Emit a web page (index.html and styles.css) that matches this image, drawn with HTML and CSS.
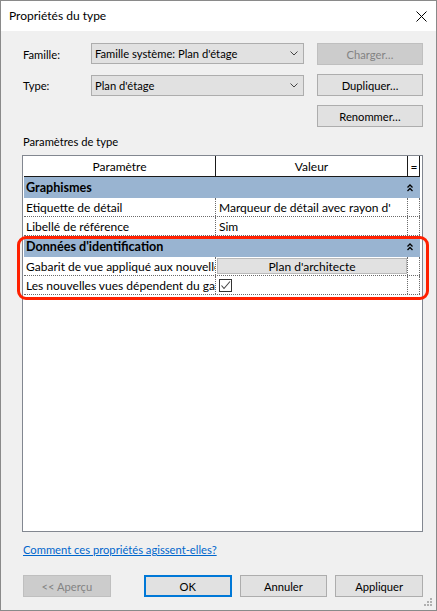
FILE: index.html
```html
<!DOCTYPE html>
<html lang="fr">
<head>
<meta charset="utf-8">
<title>Propriétés du type</title>
<link rel="stylesheet" href="styles.css">
</head>
<body>
<div class="window">
  <div class="titlebar">
    <span class="title">Propriétés du type</span>
    <svg class="close" width="11" height="11" viewBox="0 0 11 11"><path d="M0.5 0.5 L10.5 10.5 M10.5 0.5 L0.5 10.5" stroke="#000" stroke-width="1" fill="none"/></svg>
  </div>
  <div class="body">
    <div class="top">
      <span class="label r1">Famille:</span>
      <div class="combo r1">
        <span>Famille système: Plan d'étage</span>
        <svg class="chev" width="8" height="5" viewBox="0 0 8 5"><polyline points="0.5,0.5 4,4 7.5,0.5" fill="none" stroke="#444" stroke-width="1"/></svg>
      </div>
      <button class="btn disabled r1">Charger…</button>
      <span class="label r2">Type:</span>
      <div class="combo combo2 r2">
        <span>Plan d'étage</span>
        <svg class="chev" width="8" height="5" viewBox="0 0 8 5"><polyline points="0.5,0.5 4,4 7.5,0.5" fill="none" stroke="#444" stroke-width="1"/></svg>
      </div>
      <button class="btn r2">Dupliquer…</button>
      <button class="btn r3">Renommer…</button>
    </div>

    <div class="section-label">Paramètres de type</div>

    <div class="grid">
      <div class="row head">
        <div class="c1">Paramètre</div>
        <div class="c2">Valeur</div>
        <div class="c3">=</div>
      </div>
      <div class="band">
        <span>Graphismes</span>
        <svg class="dchev" width="6" height="8" viewBox="0 0 6 8"><polyline points="0.5,3.5 3,1 5.5,3.5" fill="none" stroke="#000" stroke-width="1.3"/><polyline points="0.5,7 3,4.5 5.5,7" fill="none" stroke="#000" stroke-width="1.3"/></svg>
      </div>
      <div class="row data">
        <div class="c1">Etiquette de détail</div>
        <div class="c2">Marqueur de détail avec rayon d'</div>
        <div class="c3"></div>
      </div>
      <div class="row data">
        <div class="c1">Libellé de référence</div>
        <div class="c2">Sim</div>
        <div class="c3"></div>
      </div>
      <div class="band">
        <span>Données d'identification</span>
        <svg class="dchev" width="6" height="8" viewBox="0 0 6 8"><polyline points="0.5,3.5 3,1 5.5,3.5" fill="none" stroke="#000" stroke-width="1.3"/><polyline points="0.5,7 3,4.5 5.5,7" fill="none" stroke="#000" stroke-width="1.3"/></svg>
      </div>
      <div class="row data">
        <div class="c1">Gabarit de vue appliqué aux nouvelles vues</div>
        <div class="c2 btncell"><span class="cellbtn">Plan d'architecte</span></div>
        <div class="c3"></div>
      </div>
      <div class="row data">
        <div class="c1">Les nouvelles vues dépendent du gabarit</div>
        <div class="c2"><span class="check"><svg width="11" height="11" viewBox="0 0 11 11"><polyline points="1.5,5.5 4,8.5 10,1.5" fill="none" stroke="#444" stroke-width="1.1"/></svg></span></div>
        <div class="c3"></div>
      </div>
    </div>

    <a class="help" href="#">Comment ces propriétés agissent-elles?</a>

    <div class="footer">
      <button class="btn disabled">&lt;&lt; Aperçu</button>
      <button class="btn default">OK</button>
      <button class="btn">Annuler</button>
      <button class="btn">Appliquer</button>
    </div>
  </div>

  <div class="highlight"></div>
  <svg class="grip" width="9" height="9" viewBox="0 0 9 9">
    <rect x="6" y="0" width="2" height="2" fill="#b0b0b0"/>
    <rect x="3" y="3" width="2" height="2" fill="#b0b0b0"/>
    <rect x="6" y="3" width="2" height="2" fill="#b0b0b0"/>
    <rect x="0" y="6" width="2" height="2" fill="#b0b0b0"/>
    <rect x="3" y="6" width="2" height="2" fill="#b0b0b0"/>
    <rect x="6" y="6" width="2" height="2" fill="#b0b0b0"/>
  </svg>
</div>
</body>
</html>
```

FILE: styles.css
```css
* { box-sizing: border-box; }
html, body { margin: 0; padding: 0; }
body {
  font-family: Lato, "Liberation Sans", sans-serif;
  font-size: 11.2px;
  color: #000;
  background: #f0f0f0;
}
.window {
  position: relative;
  width: 437px;
  height: 611px;
  border: 1px solid #8a8a8a;
  background: #f0f0f0;
  display: flex;
  flex-direction: column;
}
.titlebar {
  height: 30px;
  background: #fff;
  display: flex;
  align-items: center;
  justify-content: space-between;
  padding: 0 9px 1px 8px;
  flex: none;
}
.title { font-size: 12px; }
.close { display: block; margin-top: 2px; }

.body {
  flex: 1;
  padding: 12px 13px 0 21px;
  display: flex;
  flex-direction: column;
}
.top {
  display: grid;
  grid-template-columns: 69px 213px 1fr;
  grid-template-rows: 22px 22px 22px;
  row-gap: 9px;
}
.r1 { grid-row: 1; }
.r2 { grid-row: 2; }
.r3 { grid-row: 3; grid-column: 3; }
.label { display: flex; align-items: center; padding-left: 1px; }
.combo {
  height: 21px;
  border: 1px solid #adadad;
  background: #e1e1e1;
  display: flex;
  align-items: center;
  justify-content: space-between;
  padding: 0 5px 0 3px;
}
.combo2 { margin-top: 1px; }
.chev { display: block; }
.btn {
  font: inherit;
  color: #000;
  height: 22px;
  width: 106px;
  justify-self: end;
  border: 1px solid #adadad;
  background: #e1e1e1;
  padding: 0;
  margin: 0;
  text-align: center;
}
.btn.disabled {
  background: #cccccc;
  border-color: #bfbfbf;
  color: #838383;
}
.btn.default {
  border: 2px solid #0078d7;
}

.section-label {
  margin-top: 7px;
  height: 16px;
  line-height: 16px;
  padding-left: 1px;
}

.grid {
  margin-top: 5px;
  height: 377px;
  border: 1px solid #828790;
  background: #fff;
  padding: 0 2px 0 1px;
  flex: none;
}
.row { display: flex; }
.row > div { white-space: nowrap; overflow: hidden; }
.c1 { width: 192px; }
.c2 { width: 192px; }
.c3 { width: 12px; }
.head {
  height: 21px;
  border-bottom: 1px solid #1a1a1a;
  font-size: 12px;
}
.head > div {
  border-right: 1px solid #1a1a1a;
  display: flex;
  align-items: center;
  justify-content: center;
}
.head .c3 { padding-left: 1px; }
.band {
  height: 21px;
  background: #99b4d1;
  display: flex;
  align-items: center;
  justify-content: space-between;
  padding: 0 7px 0 2px;
  font-weight: bold;
  font-size: 12.6px;
}
.dchev { display: block; }
.data {
  height: 19px;
  border-bottom: 1px dotted #6a6a6a;
  font-size: 12px;
}
.data > div {
  border-right: 1px dotted #6a6a6a;
  display: flex;
  align-items: center;
}
.data .c1 { padding-left: 2px; }
.data .c2 { padding-left: 3px; }
.data .btncell { padding: 1px 0 1px 1px; }
.cellbtn {
  flex: 1;
  height: 100%;
  background: #e1e1e1;
  border: 1px solid #b9b9b9;
  display: flex;
  align-items: center;
  justify-content: center;
}
.check {
  width: 13px;
  height: 13px;
  border: 1px solid #333;
  background: #fff;
  display: flex;
  align-items: center;
  justify-content: center;
}
.check svg { display: block; }

.help {
  margin-top: 10px;
  line-height: 16px;
  color: #0066cc;
  text-decoration: underline;
  align-self: flex-start;
  padding-left: 1px;
}
.footer {
  margin-top: 17px;
  display: flex;
}
.footer .btn { width: 88px; margin-left: 8px; }
.footer .btn:first-child { margin-left: 1px; }
.footer .btn.default { margin-left: 33px; }

.highlight {
  position: absolute;
  left: 16px;
  top: 235px;
  width: 412px;
  height: 64px;
  border: 3px solid #ff2000;
  border-radius: 9px;
  pointer-events: none;
}
.grip {
  position: absolute;
  right: 3px;
  bottom: 3px;
}
```
